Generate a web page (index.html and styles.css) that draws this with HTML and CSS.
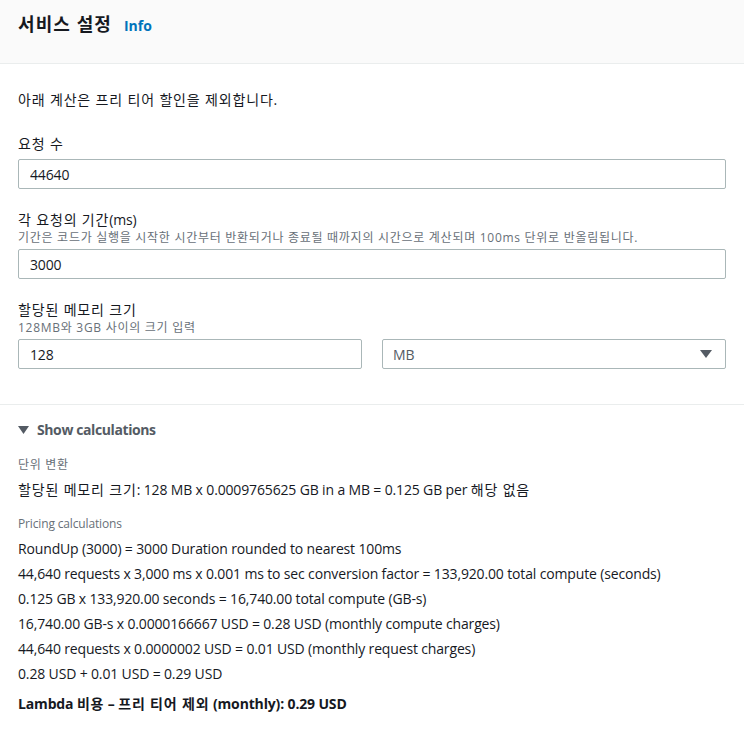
FILE: index.html
```html
<!DOCTYPE html>
<html lang="ko">
<head>
  <meta charset="UTF-8">
  <title>서비스 설정</title>
  <link rel="stylesheet" href="styles.css">
</head>
<body>
  <div class="panel-header">
    <h2 class="ko">서비스 설정</h2>
    <a class="info-link" href="#">Info</a>
  </div>

  <div class="panel-body">
    <p class="intro ko">아래 계산은 프리 티어 할인을 제외합니다.</p>

    <div class="field">
      <label class="field-label ko">요청 수</label>
      <input class="text-input" type="text" value="44640">
    </div>

    <div class="field">
      <label class="field-label"><span class="ko">각 요청의 기간</span>(ms)</label>
      <div class="field-desc ko">기간은 코드가 실행을 시작한 시간부터 반환되거나 종료될 때까지의 시간으로 계산되며 100ms 단위로 반올림됩니다.</div>
      <input class="text-input" type="text" value="3000">
    </div>

    <div class="field">
      <label class="field-label ko">할당된 메모리 크기</label>
      <div class="field-desc ko">128MB와 3GB 사이의 크기 입력</div>
      <div class="field-row">
        <input class="text-input" type="text" value="128">
        <div class="select-box">
          <span>MB</span>
          <svg width="12" height="8" viewBox="0 0 12 8"><path d="M0 0h12L6 8z" fill="#545b64"/></svg>
        </div>
      </div>
    </div>
  </div>

  <div class="calc-section">
    <div class="calc-toggle">
      <svg width="11" height="8" viewBox="0 0 11 8"><path d="M0 0h11L5.5 8z" fill="#545b64"/></svg>
      <span>Show calculations</span>
    </div>

    <div class="calc-heading ko">단위 변환</div>
    <div class="calc-line"><span class="ko">할당된 메모리 크기</span>: 128 MB x 0.0009765625 GB in a MB = 0.125 GB per <span class="ko">해당 없음</span></div>

    <div class="calc-heading">Pricing calculations</div>
    <div class="calc-line">RoundUp (3000) = 3000 Duration rounded to nearest 100ms</div>
    <div class="calc-line">44,640 requests x 3,000 ms x 0.001 ms to sec conversion factor = 133,920.00 total compute (seconds)</div>
    <div class="calc-line">0.125 GB x 133,920.00 seconds = 16,740.00 total compute (GB-s)</div>
    <div class="calc-line">16,740.00 GB-s x 0.0000166667 USD = 0.28 USD (monthly compute charges)</div>
    <div class="calc-line">44,640 requests x 0.0000002 USD = 0.01 USD (monthly request charges)</div>
    <div class="calc-line">0.28 USD + 0.01 USD = 0.29 USD</div>
    <div class="calc-total">Lambda <span class="ko">비용</span> – <span class="ko">프리 티어 제외</span> (monthly): 0.29 USD</div>
  </div>
</body>
</html>
```

FILE: styles.css
```css
/* Service settings panel */
body {
  margin: 0;
  font-family: "Open Sans", "Noto Sans CJK KR", sans-serif;
  font-size: 14px;
  letter-spacing: -0.15px;
  color: #16191f;
  background-color: #fff;
}

/* Korean runs are set a little wider */
.ko {
  letter-spacing: 0.06em;
}

.panel-header {
  display: flex;
  align-items: baseline;
  gap: 12px;
  height: 64px;
  box-sizing: border-box;
  padding: 10px 18px 0;
  background-color: #fafafa;
  border-bottom: 1px solid #eaeded;
}

.panel-header h2 {
  margin: 0;
  font-size: 18px;
  font-weight: 700;
}

.info-link {
  color: #0073bb;
  font-size: 14px;
  font-weight: 700;
  letter-spacing: 0;
  text-decoration: none;
}

.panel-body {
  padding: 25px 18px 35px;
  border-bottom: 1px solid #eaeded;
}

.intro {
  margin: 0 0 22px;
  line-height: 22px;
}

.field {
  margin-bottom: 20px;
}

.field:last-child {
  margin-bottom: 0;
}

.field-label {
  display: block;
  line-height: 22px;
  margin-bottom: 4px;
}

.field-desc {
  font-size: 12px;
  color: #687078;
  line-height: 16px;
  margin: -5px 0 3px;
}

.text-input {
  display: block;
  width: 100%;
  box-sizing: border-box;
  height: 30px;
  padding: 0 11px;
  border: 1px solid #aab7b8;
  border-radius: 2px;
  font-family: inherit;
  font-size: 14px;
  letter-spacing: inherit;
  color: #16191f;
}

.field-row {
  display: grid;
  grid-template-columns: 1fr 1fr;
  gap: 20px;
}

.select-box {
  display: flex;
  align-items: center;
  justify-content: space-between;
  height: 30px;
  box-sizing: border-box;
  padding: 0 13px 0 10px;
  border: 1px solid #aab7b8;
  border-radius: 2px;
  color: #545b64;
}

.calc-section {
  padding: 16px 18px 20px;
}

.calc-toggle {
  display: flex;
  align-items: center;
  gap: 8px;
  color: #545b64;
  font-weight: 700;
  letter-spacing: -0.4px;
  line-height: 18px;
  margin-bottom: 16px;
}

.calc-heading {
  font-size: 12px;
  color: #687078;
  line-height: 20px;
  margin-top: 8px;
}

.calc-line + .calc-heading {
  margin-top: 12px;
}

.calc-line {
  line-height: 25px;
}

.calc-heading + .calc-line {
  margin-top: 2px;
}

.calc-total {
  font-weight: 700;
  line-height: 20px;
  margin-top: 8px;
}
```
